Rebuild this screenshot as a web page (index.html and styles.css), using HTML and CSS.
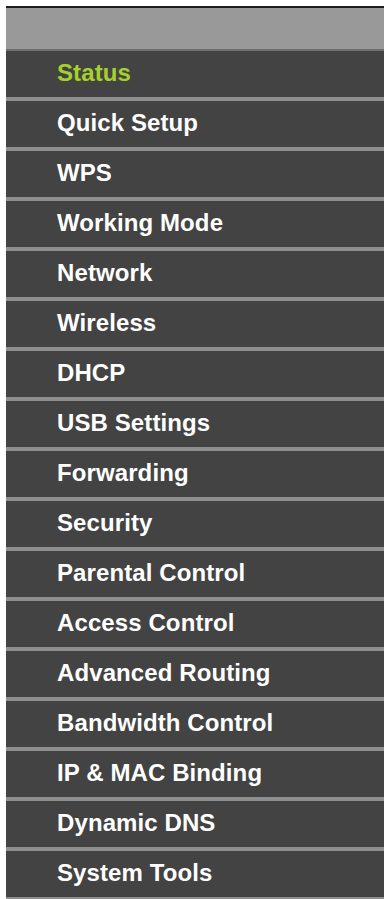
FILE: index.html
```html
<!DOCTYPE html>
<html>
<head>
<meta charset="utf-8">
<link rel="stylesheet" href="styles.css">
</head>
<body>
<div class="menu">
  <div class="menu-head"></div>
  <ul class="menu-list">
    <li class="item active">Status</li>
    <li class="item">Quick Setup</li>
    <li class="item">WPS</li>
    <li class="item">Working Mode</li>
    <li class="item">Network</li>
    <li class="item">Wireless</li>
    <li class="item">DHCP</li>
    <li class="item">USB Settings</li>
    <li class="item">Forwarding</li>
    <li class="item">Security</li>
    <li class="item">Parental Control</li>
    <li class="item">Access Control</li>
    <li class="item">Advanced Routing</li>
    <li class="item">Bandwidth Control</li>
    <li class="item">IP &amp; MAC Binding</li>
    <li class="item">Dynamic DNS</li>
    <li class="item">System Tools</li>
  </ul>
</div>
</body>
</html>
```
FILE: styles.css
```css
html, body {
  margin: 0;
  padding: 0;
  background: #ffffff;
}
body {
  padding: 6px 0 0 6px;
  font-family: "Liberation Sans", Arial, sans-serif;
  overflow: hidden;
}
.menu {
  border-top: 2px solid #1c1c1c;
  background: #434343;
}
.menu-head {
  height: 41px;
  background: #999999;
  border-bottom: 2px solid #6f6f6f;
}
.menu-list {
  list-style: none;
  margin: 0;
  padding: 0;
}
.item {
  height: 46px;
  line-height: 43px;
  border-bottom: 4px solid #8e8e8e;
  padding-left: 51px;
  color: #ffffff;
  font-weight: bold;
  font-size: 24px;
  letter-spacing: 0.1px;
  background: #434343;
}
.item.active {
  color: #a4d22a;
}
```
